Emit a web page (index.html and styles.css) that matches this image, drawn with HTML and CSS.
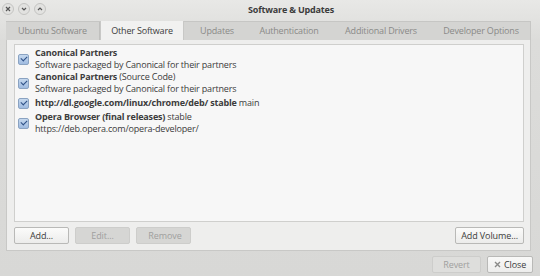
FILE: index.html
```html
<!DOCTYPE html>
<html lang="en">
<head>
    <meta charset="UTF-8">
    <title>Software &amp; Updates</title>
    <link rel="stylesheet" href="styles.css">
</head>
<body>
    <div class="janela">
        <div class="titulo">
            <div class="botoes-janela">
                <span class="bj">
                    <svg width="6" height="6" viewBox="0 0 6 6"><path d="M1 1L5 5M5 1L1 5" stroke="#555" stroke-width="1.2"/></svg>
                </span>
                <span class="bj">
                    <svg width="6" height="6" viewBox="0 0 6 6"><path d="M1 2L3 4L5 2" stroke="#555" stroke-width="1.2" fill="none"/></svg>
                </span>
                <span class="bj">
                    <svg width="6" height="6" viewBox="0 0 6 6"><path d="M1 4L3 2L5 4" stroke="#555" stroke-width="1.2" fill="none"/></svg>
                </span>
            </div>
            <span class="titulo-texto">Software &amp; Updates</span>
        </div>

        <div class="abas">
            <div class="aba a1">Ubuntu Software</div>
            <div class="aba a2 ativa">Other Software</div>
            <div class="aba a3">Updates</div>
            <div class="aba a4">Authentication</div>
            <div class="aba a5">Additional Drivers</div>
            <div class="aba a6">Developer Options</div>
        </div>

        <div class="painel">
            <div class="lista">
                <div class="item">
                    <span class="caixa"></span>
                    <div>
                        <p><b>Canonical Partners</b></p>
                        <p>Software packaged by Canonical for their partners</p>
                    </div>
                </div>
                <div class="item">
                    <span class="caixa"></span>
                    <div>
                        <p><b>Canonical Partners</b> (Source Code)</p>
                        <p>Software packaged by Canonical for their partners</p>
                    </div>
                </div>
                <div class="item unico">
                    <span class="caixa"></span>
                    <div>
                        <p><b>http://dl.google.com/linux/chrome/deb/ stable</b> main</p>
                    </div>
                </div>
                <div class="item">
                    <span class="caixa"></span>
                    <div>
                        <p><b>Opera Browser (final releases)</b> stable</p>
                        <p>https://deb.opera.com/opera-developer/</p>
                    </div>
                </div>
            </div>
            <div class="acoes">
                <button class="btn">Add...</button>
                <button class="btn off">Edit...</button>
                <button class="btn off remover"><span class="menos"></span>Remove</button>
                <button class="btn volume">Add Volume...</button>
            </div>
        </div>

        <div class="rodape">
            <button class="btn off revert">Revert</button>
            <button class="btn fechar">
                <svg width="7" height="7" viewBox="0 0 7 7"><path d="M1 1L6 6M6 1L1 6" stroke="#8a8a88" stroke-width="1.4"/></svg>
                Close
            </button>
        </div>
    </div>
</body>
</html>
```

FILE: styles.css
```css
body {
    margin: 0;
    font-family: "Open Sans", "DejaVu Sans", sans-serif;
    font-size: 9px;
    letter-spacing: -0.18px;
    color: #3c3c3c;
    background-color: #d9d9d7;
}

.janela {
    width: 540px;
    height: 276px;
    background: linear-gradient(#e8e8e6, #dcdcda 40px, #d8d8d6);
    overflow: hidden;
}

.titulo {
    height: 18px;
    display: flex;
    align-items: center;
    position: relative;
}

.botoes-janela {
    display: flex;
    gap: 4px;
    padding-left: 2px;
}

.bj {
    width: 10px;
    height: 10px;
    border-radius: 50%;
    background: #e2e2e0;
    border: 1px solid #c4c4c2;
    display: flex;
    align-items: center;
    justify-content: center;
}

.titulo-texto {
    position: absolute;
    left: 0;
    right: 0;
    text-align: center;
    padding-left: 42px;
    font-weight: bold;
    font-size: 9px;
    color: #3c3c3c;
}

.abas {
    display: flex;
    margin: 3px 9px 0 6px;
    height: 18px;
    background: #d4d4d2;
    border-top: 1px solid #c6c6c4;
    border-right: 1px solid #c6c6c4;
}

.aba {
    line-height: 17px;
    color: #8a8a88;
    white-space: nowrap;
    text-align: center;
    flex: none;
}

.a1 { width: 93px; border-right: 1px solid #c0c0be; }
.a2 { width: 84px; }
.a3 { width: 66px; }
.a4 { width: 78px; }
.a5 { width: 106px; }
.a6 { width: 94px; }

.aba.ativa {
    background: #f1f1f0;
    color: #3c3c3c;
    height: 19px;
    margin-top: -1px;
    border-left: 1px solid #c8c8c6;
    border-right: 1px solid #c8c8c6;
    box-sizing: border-box;
    line-height: 19px;
}

.painel {
    margin: 0 9px 0 6px;
    background: #eeeeed;
    border: 1px solid #c8c8c6;
    border-top: none;
    padding: 4px 6px 6px 7px;
    height: 211px;
    box-sizing: border-box;
    display: flex;
    flex-direction: column;
}

.lista {
    flex: 1;
    background: #f7f7f7;
    border: 1px solid #cfcfcd;
    padding: 2px 0 0 2px;
}

.item {
    display: flex;
    align-items: center;
    gap: 6px;
    padding: 0 0 0 1px;
}

.item.unico {
    margin: 2px 0;
}

.item p {
    margin: 0;
    line-height: 12px;
    white-space: nowrap;
}

.item b {
    font-weight: bold;
}

.caixa {
    width: 9px;
    height: 9px;
    border: 1px solid #8aa3c2;
    border-radius: 2px;
    background: linear-gradient(#c5d8ee, #9fbbe0);
    position: relative;
    flex: none;
}

.caixa::after {
    content: "";
    position: absolute;
    left: 2px;
    top: 1px;
    width: 5px;
    height: 3px;
    border-left: 1.5px solid #2c4f86;
    border-bottom: 1.5px solid #2c4f86;
    transform: rotate(-45deg);
}

.acoes {
    display: flex;
    gap: 6px;
    margin-top: 5px;
}

.btn {
    font-family: inherit;
    font-size: 9px;
    letter-spacing: -0.1px;
    height: 17px;
    padding: 0 10px;
    border: 1px solid #b9b9b7;
    border-radius: 2px;
    background: linear-gradient(#fbfbfa, #ececeb);
    color: #3c3c3c;
    box-sizing: border-box;
}

.acoes .btn {
    width: 55px;
}

.btn.off {
    background: #d6d6d4;
    color: #a0a09e;
    border-color: #cdcdcb;
}

.remover {
    display: flex;
    align-items: center;
    justify-content: center;
    gap: 3px;
}

.menos {
    width: 7px;
    height: 2px;
    background: #9a9a98;
}

.acoes .volume {
    width: auto;
    margin-left: auto;
    padding: 0 5px;
}

.rodape {
    display: flex;
    justify-content: flex-end;
    gap: 6px;
    padding: 5px 7px 0 0;
}

.revert {
    width: 49px;
}

.btn.off.revert {
    background: #dededc;
}

.fechar {
    width: 46px;
    padding: 0;
    display: flex;
    align-items: center;
    justify-content: center;
    gap: 3px;
    background: linear-gradient(#f9f9f8, #ededec);
}
```
